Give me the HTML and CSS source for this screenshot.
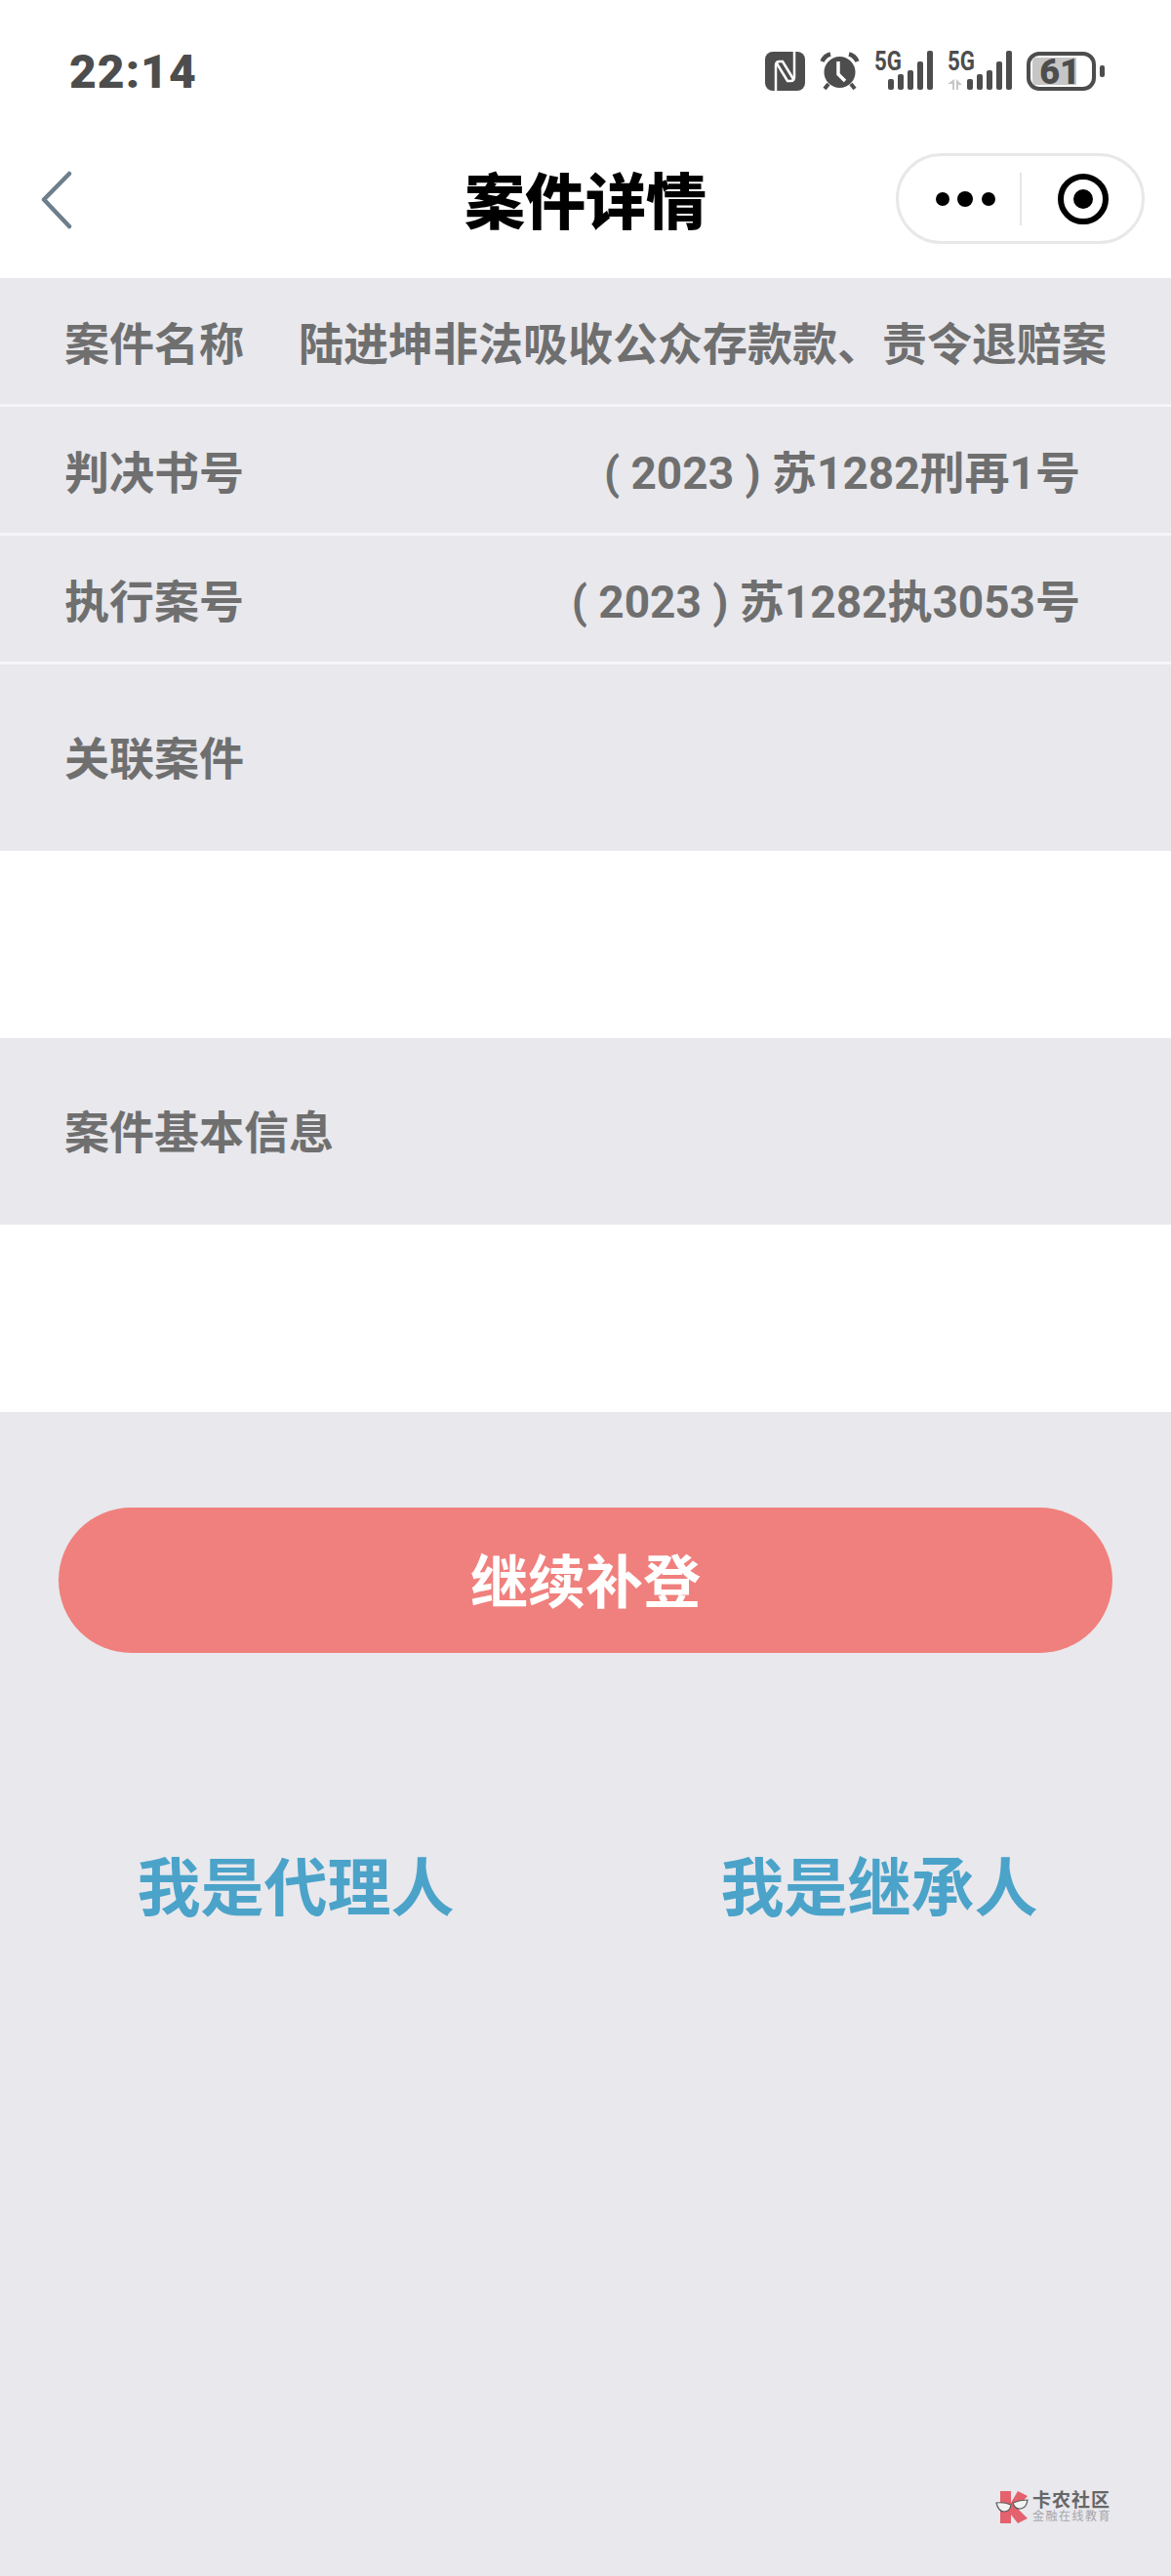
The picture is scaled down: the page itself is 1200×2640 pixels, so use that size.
FILE: index.html
```html
<!doctype html>
<html lang="zh">
<head>
	<meta charset="utf-8">
	<title>案件详情</title>
	<link rel="stylesheet" href="styles.css">
</head>
<body>
	<div class="status-bar">
		<span class="time">22:14</span>
		<div class="status-icons">
			<svg viewBox="0 0 41 40" width="41" height="40">
				<rect width="41" height="40" rx="8" fill="#4d4d4d"/>
				<path d="M11 40V14Q11 10 15 10h3L29 28" fill="none" stroke="#fff" stroke-width="2.500"/>
				<path d="M30 0V26Q30 30 26 30h-3L12 12" fill="none" stroke="#fff" stroke-width="2.500"/>
			</svg>
			<svg viewBox="0 0 41 40" width="41" height="40">
				<circle cx="20.500" cy="21" r="16" fill="#4d4d4d"/>
				<path d="M2.500 10Q5 4 11 2.500M38.500 10Q36 4 30 2.500" fill="none" stroke="#4d4d4d" stroke-width="4.500"/>
				<path d="M9 33l-4 5M32 33l4 5" stroke="#4d4d4d" stroke-width="4"/>
				<path d="M19 10v13l7 7" fill="none" stroke="#fff" stroke-width="3.500"/>
			</svg>
			<svg class="signal" viewBox="0 0 60 42" width="60" height="42">
				<text x="0" y="20" class="net-text" textLength="28" lengthAdjust="spacingAndGlyphs">5G</text>
				<rect x="14" y="29" width="6" height="11" rx="2" fill="#4d4d4d"/>
				<rect x="24" y="24" width="6" height="16" rx="2" fill="#4d4d4d"/>
				<rect x="34" y="20" width="6" height="20" rx="2" fill="#4d4d4d"/>
				<rect x="44" y="11" width="6" height="29" rx="2" fill="#4d4d4d"/>
				<rect x="54" y="0" width="6" height="40" rx="2" fill="#4d4d4d"/>
			</svg>
			<svg class="signal" viewBox="0 0 66 42" width="66" height="42">
				<text x="0" y="20" class="net-text" textLength="28" lengthAdjust="spacingAndGlyphs">5G</text>
				<path d="M7 29v11H5v-6H0zM9 29l6 6H11v5H9z" fill="#c8c8c8"/>
				<rect x="20" y="29" width="6" height="11" rx="2" fill="#4d4d4d"/>
				<rect x="30" y="24" width="6" height="16" rx="2" fill="#4d4d4d"/>
				<rect x="40" y="20" width="6" height="20" rx="2" fill="#4d4d4d"/>
				<rect x="50" y="11" width="6" height="29" rx="2" fill="#4d4d4d"/>
				<rect x="60" y="0" width="6" height="40" rx="2" fill="#4d4d4d"/>
			</svg>
			<svg class="battery" viewBox="0 0 80 40" width="80" height="40">
				<rect x="2" y="2" width="67" height="36" rx="11" fill="#fff" stroke="#4d4d4d" stroke-width="4"/>
				<path d="M9 6h42v28H9Q6 34 6 29V11Q6 6 9 6z" fill="#c6c6c6"/>
				<text x="34" y="33" class="battery-text">61</text>
				<rect x="75" y="14" width="5" height="12" rx="2" fill="#4d4d4d"/>
			</svg>
		</div>
	</div>

	<div class="nav-bar">
		<svg class="back" viewBox="0 0 32 60" width="32" height="60">
			<path d="M29 3L3 29.500 29 57" fill="none" stroke="#6d7f8d" stroke-width="4.500" stroke-linecap="round" stroke-linejoin="round"/>
		</svg>
		<h1 class="title">案件详情</h1>
		<div class="capsule">
			<svg viewBox="0 0 62 16" width="62" height="16">
				<circle cx="7" cy="8" r="7" fill="#000"/>
				<circle cx="30" cy="8" r="8" fill="#000"/>
				<circle cx="54" cy="8" r="7" fill="#000"/>
			</svg>
			<span class="capsule-line"></span>
			<svg viewBox="0 0 52 52" width="52" height="52">
				<circle cx="26" cy="26" r="23" fill="none" stroke="#000" stroke-width="6"/>
				<circle cx="26" cy="26" r="10" fill="#000"/>
			</svg>
		</div>
	</div>

	<div class="info-row">
		<span class="label">案件名称</span>
		<span class="value long">陆进坤非法吸收公众存款款、责令退赔案</span>
	</div>
	<div class="info-row">
		<span class="label">判决书号</span>
		<span class="value">( 2023 ) 苏1282刑再1号</span>
	</div>
	<div class="info-row">
		<span class="label">执行案号</span>
		<span class="value">( 2023 ) 苏1282执3053号</span>
	</div>

	<div class="section-head">关联案件</div>
	<div class="section-body"></div>
	<div class="section-head">案件基本信息</div>
	<div class="section-body"></div>

	<div class="actions">
		<button class="main-btn" type="button">继续补登</button>
		<div class="links">
			<a class="link">我是代理人</a>
			<a class="link">我是继承人</a>
		</div>
	</div>

	<div class="watermark">
		<svg viewBox="0 0 34 34" width="34" height="34">
			<path d="M5 1h11v12L23 1l10 5-11 12 11 11-10 5-7-9v10H5z" fill="#e4616d"/>
			<path d="M1 13q8-1 15 2-1 7-7 7Q3 22 1 13zM18 13q7-3 15-3-1 8-7 9-6 1-8-6z" fill="#f2f3f3" stroke="#5c5c5c" stroke-width="1.200"/>
		</svg>
		<div class="wm-text">
			<span class="wm-name">卡农社区</span>
			<span class="wm-sub">金融在线教育</span>
		</div>
	</div>
</body>
</html>
```

FILE: styles.css
```css
* {
	box-sizing: border-box;
}

body {
	margin: 0;
	height: 2640px;
	position: relative;
	overflow: hidden;
	background-color: #e8e8ed;
	font-family: Roboto, "Noto Sans CJK SC", sans-serif;
}

.status-bar {
	display: flex;
	justify-content: space-between;
	align-items: center;
	height: 125px;
	padding: 21px 68px 0 71px;
	background-color: #fff;
}

.time {
	font-size: 48px;
	font-weight: 900;
	letter-spacing: 1px;
	color: #4d4d4d;
}

.status-icons {
	display: flex;
	align-items: center;
	gap: 15px;
}

.signal,
.battery {
	overflow: visible;
}

.net-text {
	font-size: 28px;
	font-weight: 700;
	fill: #4d4d4d;
}

.battery-text {
	font-size: 36px;
	font-weight: 900;
	fill: #4d4d4d;
	text-anchor: middle;
}

.nav-bar {
	display: flex;
	align-items: center;
	position: relative;
	height: 160px;
	padding: 0 27px 0 42px;
	background-color: #fff;
}

.back {
	display: block;
}

.title {
	position: absolute;
	left: 0;
	right: 0;
	margin: 7px 0 0;
	font-size: 62px;
	font-weight: 900;
	line-height: 1;
	text-align: center;
	color: #000;
}

.capsule {
	display: flex;
	align-items: center;
	width: 255px;
	height: 93px;
	margin: 0 0 3px auto;
	padding-left: 38px;
	border: 3px solid #e8e8e8;
	border-radius: 47px;
}

.capsule-line {
	width: 2px;
	height: 54px;
	margin: 0 37px 0 24px;
	background-color: #e6e6e6;
}

.info-row {
	display: flex;
	justify-content: space-between;
	align-items: center;
	height: 132px;
	padding: 0 66px 2px;
	border-bottom: 3px solid #f6f6f8;
	font-size: 46px;
	font-weight: 700;
	color: #6f6f6f;
}

.info-row .value {
	padding-right: 27px;
}

.info-row .value.long {
	padding-right: 0;
}

.label {
	white-space: nowrap;
}

.section-head {
	display: flex;
	align-items: center;
	height: 191px;
	padding: 0 66px 6px;
	font-size: 46px;
	font-weight: 700;
	color: #6f6f6f;
}

.section-body {
	height: 192px;
	background-color: #fff;
}

.actions {
	padding-top: 98px;
}

.main-btn {
	display: block;
	width: 1080px;
	height: 149px;
	margin: 0 auto;
	padding: 0 0 4px;
	border: 0;
	border-radius: 75px;
	background-color: #f0807d;
	font-family: inherit;
	font-size: 59px;
	font-weight: 700;
	color: #fff;
}

.links {
	display: grid;
	grid-template-columns: 1fr 1fr;
	margin-top: 194px;
	padding-left: 4px;
}

.link {
	font-size: 65px;
	font-weight: 700;
	line-height: 1.5;
	text-align: center;
	color: #4ba3c9;
}

.watermark {
	position: absolute;
	left: 1020px;
	top: 2552px;
	display: flex;
	align-items: center;
	gap: 4px;
}

.wm-text {
	display: flex;
	flex-direction: column;
	gap: 1px;
}

.wm-name {
	font-size: 19px;
	font-weight: 700;
	line-height: 19px;
	letter-spacing: 1px;
	color: #666;
}

.wm-sub {
	font-size: 12px;
	line-height: 13px;
	letter-spacing: 1.500px;
	color: #a5a5a8;
}
```
